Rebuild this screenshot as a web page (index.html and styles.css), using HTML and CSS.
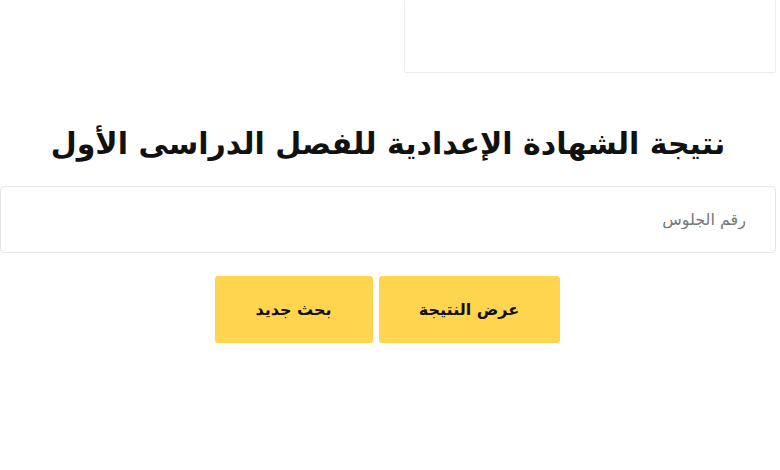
FILE: index.html
```html
<!DOCTYPE html>
<html lang="ar">
<head>
<meta charset="utf-8">
<link rel="stylesheet" href="styles.css">
</head>
<body>
<div class="page" dir="rtl">
  <div class="top-row">
    <div class="top-box"></div>
  </div>
  <h1 class="title">نتيجة الشهادة الإعدادية للفصل الدراسى الأول</h1>
  <div class="field">
    <input class="seat" type="text" placeholder="رقم الجلوس">
  </div>
  <div class="actions">
    <button class="btn btn-show">عرض النتيجة</button>
    <button class="btn btn-new">بحث جديد</button>
  </div>
</div>
</body>
</html>
```

FILE: styles.css
```css
html, body {
  margin: 0;
  padding: 0;
  background: #ffffff;
}
body {
  font-family: "DejaVu Sans", "Noto Sans", sans-serif;
  color: #111;
}
.page {
  width: 776px;
  direction: rtl;
}
.top-row {
  display: flex;
  justify-content: flex-start;
  height: 74px;
}
.top-box {
  width: 370px;
  height: 72px;
  margin-top: -1px;
  border: 1px solid #ededed;
  border-radius: 2px;
  background: #fff;
}
.title {
  margin: 46px 0 0 0;
  height: 60px;
  text-align: center;
  font-size: 30px;
  font-weight: 700;
  line-height: 48px;
  color: #111;
}
.field {
  margin-top: 6px;
}
.seat {
  box-sizing: border-box;
  width: 776px;
  height: 67px;
  border: 1px solid #e6e6e6;
  border-radius: 4px;
  padding: 0 29px;
  font-family: "DejaVu Sans", sans-serif;
  font-size: 16px;
  direction: rtl;
  text-align: right;
  outline: none;
  background: #fff;
}
.seat::placeholder {
  color: #777;
}
.actions {
  margin-top: 23px;
  display: flex;
  justify-content: center;
  gap: 6px;
  padding-right: 2px;
}
.btn {
  height: 67px;
  border: none;
  border-radius: 3px;
  background: #ffd54f;
  color: #111;
  font-family: "DejaVu Sans", sans-serif;
  font-weight: 700;
  font-size: 16px;
  cursor: pointer;
}
.btn-show { width: 181px; }
.btn-new { width: 158px; }
```
